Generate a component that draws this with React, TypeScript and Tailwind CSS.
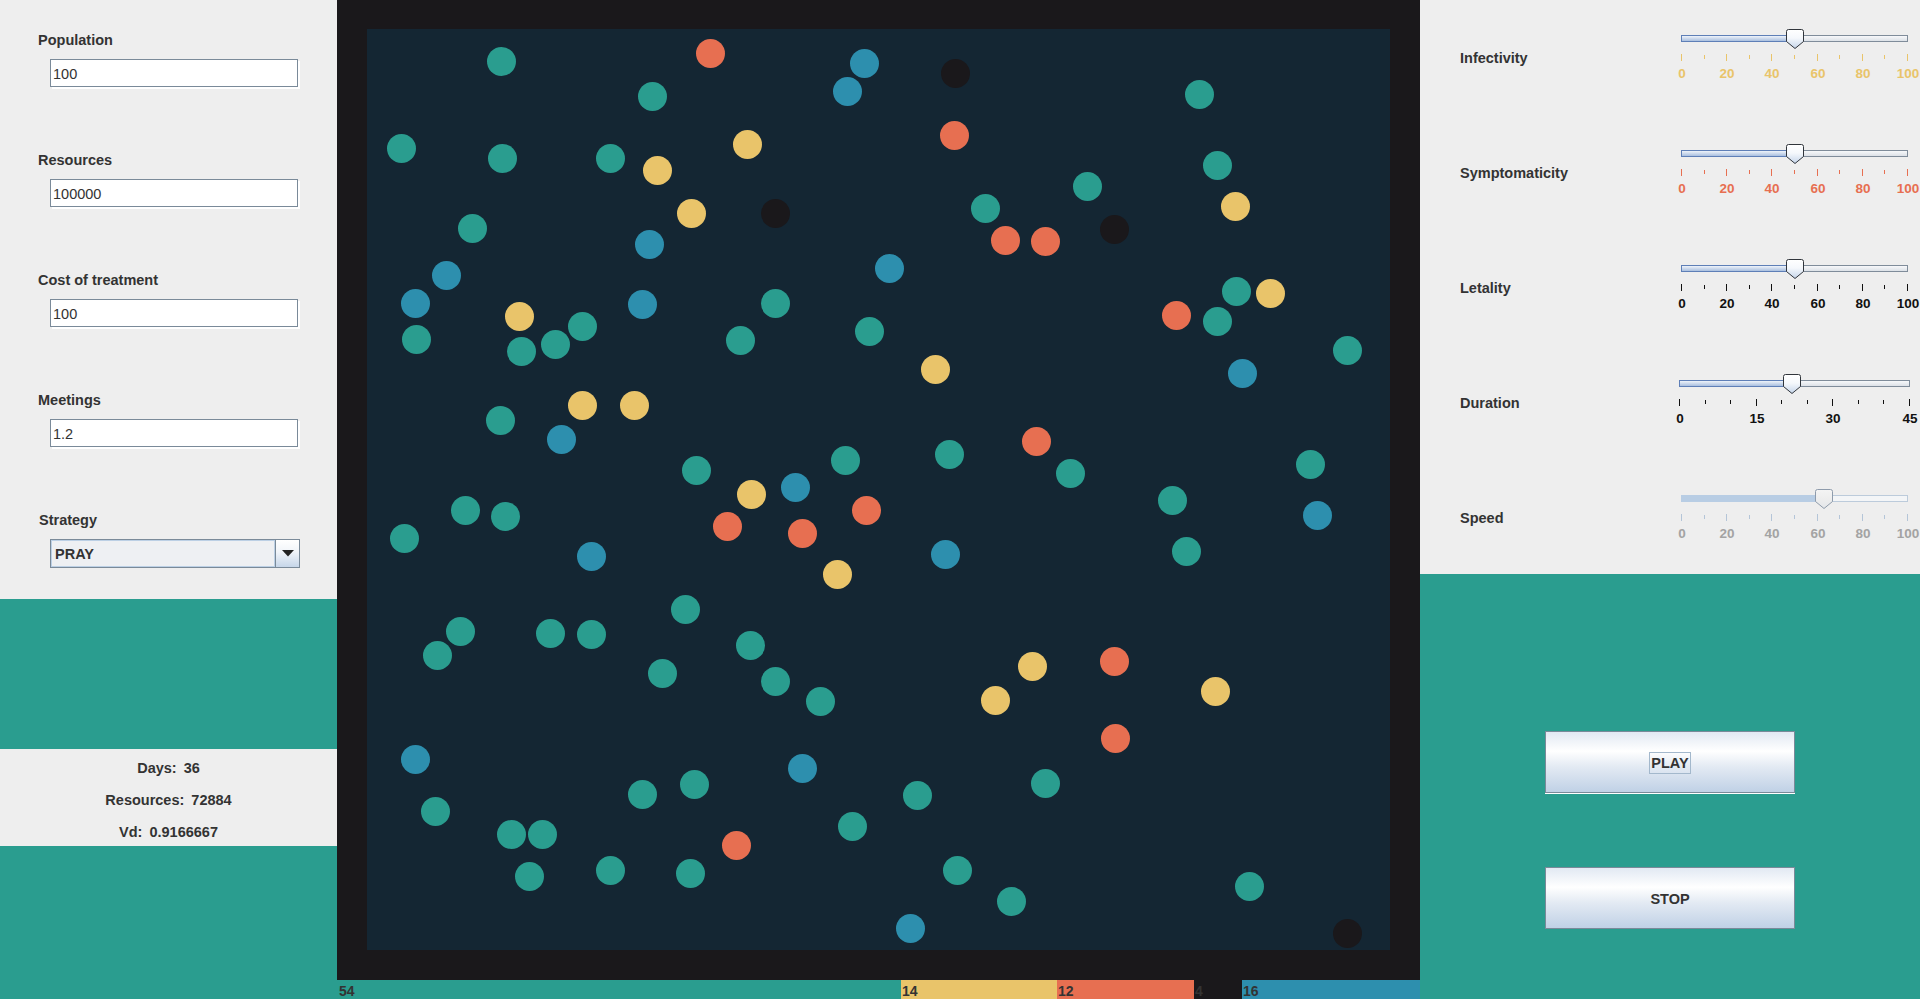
import React from "react";

const TEAL = "#2a9d8f";
const YELLOW = "#e9c46a";
const RED = "#e76f51";
const BLACK = "#1a181b";
const BLUE = "#2d8fae";

const dots: [number, number, string][] = [
  // teal
  [501, 61, TEAL], [652, 96, TEAL], [401, 148, TEAL], [502, 158, TEAL], [610, 158, TEAL],
  [472, 228, TEAL], [775, 303, TEAL], [582, 326, TEAL], [416, 339, TEAL], [555, 344, TEAL],
  [521, 351, TEAL], [740, 340, TEAL], [869, 331, TEAL], [500, 420, TEAL], [696, 470, TEAL],
  [845, 460, TEAL], [1199, 94, TEAL], [1217, 165, TEAL], [1087, 186, TEAL], [985, 208, TEAL],
  [1236, 291, TEAL], [1217, 321, TEAL], [1347, 350, TEAL], [949, 454, TEAL], [1070, 473, TEAL],
  [1310, 464, TEAL], [1172, 500, TEAL], [465, 510, TEAL], [505, 516, TEAL], [404, 538, TEAL],
  [685, 609, TEAL], [460, 631, TEAL], [437, 655, TEAL], [550, 633, TEAL], [591, 634, TEAL],
  [750, 645, TEAL], [662, 673, TEAL], [775, 681, TEAL], [820, 701, TEAL], [694, 784, TEAL],
  [642, 794, TEAL], [435, 811, TEAL], [511, 834, TEAL], [542, 834, TEAL], [852, 826, TEAL],
  [529, 876, TEAL], [610, 870, TEAL], [690, 873, TEAL], [1186, 551, TEAL], [917, 795, TEAL],
  [1045, 783, TEAL], [957, 870, TEAL], [1011, 901, TEAL], [1249, 886, TEAL],
  // yellow
  [657, 170, YELLOW], [747, 144, YELLOW], [691, 213, YELLOW], [519, 316, YELLOW], [582, 405, YELLOW],
  [634, 405, YELLOW], [751, 494, YELLOW], [1235, 206, YELLOW], [1270, 293, YELLOW], [935, 369, YELLOW],
  [837, 574, YELLOW], [1032, 666, YELLOW], [995, 700, YELLOW], [1215, 691, YELLOW],
  // red
  [710, 53, RED], [954, 135, RED], [1005, 240, RED], [1045, 241, RED], [1176, 315, RED],
  [1036, 441, RED], [866, 510, RED], [727, 526, RED], [802, 533, RED], [1114, 661, RED],
  [1115, 738, RED], [736, 845, RED],
  // black
  [775, 213, BLACK], [955, 73, BLACK], [1114, 229, BLACK], [1347, 933, BLACK],
  // blue
  [864, 63, BLUE], [847, 91, BLUE], [649, 244, BLUE], [446, 275, BLUE], [889, 268, BLUE],
  [415, 303, BLUE], [642, 304, BLUE], [561, 439, BLUE], [795, 487, BLUE], [1242, 373, BLUE],
  [591, 556, BLUE], [415, 759, BLUE], [802, 768, BLUE], [1317, 515, BLUE], [945, 554, BLUE],
  [910, 928, BLUE],
];

function TextField({ value }: { value: string }) {
  return (
    <div className="ml-[50px] mt-[9px] h-[28px] w-[248px] border border-[#7a8a99] bg-white pl-[2px] pt-[1px] text-[14.5px] leading-[26px] text-[#333] shadow-[2px_2px_0_#ffffff]">
      {value}
    </div>
  );
}

function FieldRow({ label, value }: { label: string; value: string }) {
  return (
    <div className="h-[120px] pt-[30px]">
      <div className="pl-[38px] text-[14.5px] font-bold leading-[20px] text-[#333]">{label}</div>
      <TextField value={value} />
    </div>
  );
}

function Thumb({ disabled }: { disabled?: boolean }) {
  const id = disabled ? "thumbGradD" : "thumbGrad";
  return (
    <svg width="18" height="20" viewBox="0 0 18 20">
      <defs>
        <linearGradient id={id} x1="0" y1="0" x2="0" y2="1">
          <stop offset="0" stopColor={disabled ? "#f4f4f4" : "#ffffff"} />
          <stop offset="0.45" stopColor={disabled ? "#eeeeee" : "#f5f8fc"} />
          <stop offset="1" stopColor={disabled ? "#e4e7ea" : "#c5d5ea"} />
        </linearGradient>
      </defs>
      <path
        d="M2.5 0.5 H15.5 Q17.5 0.5 17.5 2.5 V12.5 L9 19.5 L0.5 12.5 V2.5 Q0.5 0.5 2.5 0.5 Z"
        fill={`url(#${id})`}
        stroke={disabled ? "#8e9bab" : "#30353b"}
        strokeWidth="1"
      />
    </svg>
  );
}

function Slider({
  len,
  ticks,
  majorEvery,
  labels,
  frac,
  tickColor,
  labelClass,
  disabled,
}: {
  len: number;
  ticks: number;
  majorEvery: number;
  labels: string[];
  frac: number;
  tickColor: string;
  labelClass: string;
  disabled?: boolean;
}) {
  const tx = Math.round(frac * len);
  return (
    <div className="relative h-[56px]" style={{ width: len + 14 }}>
      <div
        className={
          disabled
            ? "absolute left-0 top-[6px] h-[7px] border border-[#bccbdb] bg-[#f3f5f7]"
            : "absolute left-0 top-[6px] h-[7px] border border-[#7f8c9a] bg-[linear-gradient(to_bottom,#f7f8fa,#dce1e7)]"
        }
        style={{ width: len + 1 }}
      />
      <div
        className={
          disabled
            ? "absolute left-0 top-[6px] h-[7px] bg-[#b8cde4]"
            : "absolute left-0 top-[6px] h-[7px] border border-[#5e7fb7] bg-[linear-gradient(to_bottom,#eef3fa,#a9bfdf)]"
        }
        style={{ width: tx }}
      />
      <div className="absolute top-0" style={{ left: tx - 8 }}>
        <Thumb disabled={disabled} />
      </div>
      <svg className="absolute left-0 top-[25px]" width={len + 2} height="8">
        {Array.from({ length: ticks + 1 }).map((_, i) => {
          const x = Math.round((i * len) / ticks) + 0.5;
          const major = i % majorEvery === 0;
          return (
            <line
              key={i}
              x1={x}
              x2={x}
              y1={major ? 0 : 1}
              y2={major ? 7 : 5}
              stroke={tickColor}
              strokeWidth="1"
            />
          );
        })}
      </svg>
      {labels.map((t, i) => {
        const x = Math.round((i * len) / (labels.length - 1));
        return (
          <span
            key={i}
            className={`absolute top-[37px] -translate-x-1/2 text-[13.5px] font-bold leading-[16px] ${labelClass}`}
            style={{ left: x + 1 }}
          >
            {t}
          </span>
        );
      })}
    </div>
  );
}

function SliderRow({
  label,
  children,
  offset,
}: {
  label: string;
  children: React.ReactNode;
  offset: number;
}) {
  return (
    <div className="flex h-[115px] items-start">
      <div className="w-[261px] shrink-0 pl-[40px] pt-[48px] text-[14.5px] font-bold leading-[20px] text-[#333]">
        {label}
      </div>
      <div className="pt-[29px]" style={{ marginLeft: offset }}>
        {children}
      </div>
    </div>
  );
}

const pct = ["0", "20", "40", "60", "80", "100"];

function JButton({ label, focused }: { label: string; focused?: boolean }) {
  return (
    <div
      className={`flex h-[62px] w-[250px] items-center justify-center border border-[#7a8a99] bg-[linear-gradient(to_bottom,#e2e9f3_0%,#ffffff_32%,#e3eaf3_58%,#c0d1e6_100%)] pt-[2px] text-[14.5px] font-bold text-[#333] ${
        focused ? "shadow-[0_1px_0_#ffffff]" : ""
      }`}
    >
      {focused ? (
        <span className="border border-[#a3b8cc] px-[1px] leading-[20px]">{label}</span>
      ) : (
        <span className="leading-[20px]">{label}</span>
      )}
    </div>
  );
}

function Stat({ label, value }: { label: string; value: string }) {
  return (
    <div className="flex h-[32px] items-center justify-center gap-[7px] text-[14.5px] font-bold text-[#333]">
      <span>{label}</span>
      <span>{value}</span>
    </div>
  );
}

export default function App() {
  return (
    <div className="flex h-[999px] w-[1920px] overflow-hidden font-['Liberation_Sans',Arial,sans-serif] text-[#333]">
      {/* Left panel */}
      <div className="flex w-[337px] shrink-0 flex-col">
        <div className="h-[599px] overflow-hidden bg-[#eeeeee]">
          <FieldRow label="Population" value="100" />
          <FieldRow label="Resources" value="100000" />
          <FieldRow label="Cost of treatment" value="100" />
          <FieldRow label="Meetings" value="1.2" />
          <div className="h-[120px] pt-[30px]">
            <div className="pl-[39px] text-[14.5px] font-bold leading-[20px] text-[#333]">Strategy</div>
            <div className="ml-[50px] mt-[9px] flex h-[29px] w-[250px] border border-[#7a8a99] bg-white">
              <div className="flex-1 border border-[#bcd0e5] bg-[#eef0f3] pl-[3px] pt-[1px] text-[14.5px] font-bold leading-[25px] text-[#333]">
                PRAY
              </div>
              <div className="flex w-[24px] items-center justify-center border-l border-[#7a8a99] bg-[linear-gradient(to_bottom,#ffffff,#f0f4f9_45%,#c6d6e9)]">
                <svg width="12" height="7" viewBox="0 0 12 7">
                  <path d="M0 0 H12 L6 6.5 Z" fill="#222" />
                </svg>
              </div>
            </div>
          </div>
        </div>
        <div className="h-[150px] bg-[#2a9d8f]" />
        <div className="h-[97px] bg-[#eeeeee] pt-[4px]">
          <Stat label="Days:" value="36" />
          <Stat label="Resources:" value="72884" />
          <Stat label="Vd:" value="0.9166667" />
        </div>
        <div className="flex-1 bg-[#2a9d8f]" />
      </div>

      {/* Center simulation */}
      <div className="flex w-[1083px] shrink-0 flex-col">
        <div className="h-[980px] bg-[#1a181b] pl-[30px] pt-[29px]">
          <div className="relative h-[921px] w-[1023px] overflow-hidden bg-[#142633]">
            {dots.map(([cx, cy, c], i) => (
              <div
                key={i}
                className="absolute h-[29px] w-[29px] rounded-full"
                style={{ left: cx - 367 - 14, top: cy - 29 - 14, backgroundColor: c }}
              />
            ))}
          </div>
        </div>
        <div className="flex h-[19px] text-[14px] font-bold leading-[16px] text-[#333]">
          <div className="w-[564px] bg-[#2a9d8f] pl-[2px] pt-[3px]">54</div>
          <div className="w-[156px] bg-[#e9c46a] pl-[1px] pt-[3px]">14</div>
          <div className="w-[137px] bg-[#e76f51] pl-[1px] pt-[3px]">12</div>
          <div className="w-[48px] bg-[#1a181b] pl-[1px] pt-[3px]">4</div>
          <div className="w-[178px] bg-[#2d8fae] pl-[1px] pt-[3px]">16</div>
        </div>
      </div>

      {/* Right panel */}
      <div className="flex w-[500px] shrink-0 flex-col">
        <div className="h-[574px] overflow-hidden bg-[#eeeeee]">
          <SliderRow label="Infectivity" offset={0}>
            <Slider len={226} ticks={10} majorEvery={2} labels={pct} frac={0.5} tickColor="#e9c46a" labelClass="text-[#e9c46a]" />
          </SliderRow>
          <SliderRow label="Symptomaticity" offset={0}>
            <Slider len={226} ticks={10} majorEvery={2} labels={pct} frac={0.5} tickColor="#e76f51" labelClass="text-[#e76f51]" />
          </SliderRow>
          <SliderRow label="Letality" offset={0}>
            <Slider len={226} ticks={10} majorEvery={2} labels={pct} frac={0.5} tickColor="#111111" labelClass="text-[#111111]" />
          </SliderRow>
          <SliderRow label="Duration" offset={-2}>
            <Slider len={230} ticks={9} majorEvery={3} labels={["0", "15", "30", "45"]} frac={22 / 45} tickColor="#111111" labelClass="text-[#111111]" />
          </SliderRow>
          <SliderRow label="Speed" offset={0}>
            <Slider len={226} ticks={10} majorEvery={2} labels={pct} frac={0.63} tickColor="#b4c5d8" labelClass="text-[#a3a3a3]" disabled />
          </SliderRow>
        </div>
        <div className="flex flex-1 flex-col items-center gap-[74px] bg-[#2a9d8f] pt-[157px]">
          <JButton label="PLAY" focused />
          <JButton label="STOP" />
        </div>
      </div>
    </div>
  );
}
